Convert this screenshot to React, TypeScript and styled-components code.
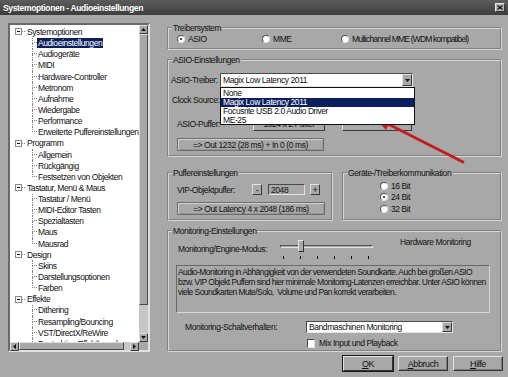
import React from 'react';
import styled, { createGlobalStyle } from 'styled-components';

// Tree data for the left navigation
interface TreeNode {
  label: string;
  children: string[];
}

const treeData: TreeNode[] = [
  {
    label: 'Systemoptionen',
    children: [
      'Audioeinstellungen',
      'Audiogeräte',
      'MIDI',
      'Hardware-Controller',
      'Metronom',
      'Aufnahme',
      'Wiedergabe',
      'Performance',
      'Erweiterte Puffereinstellungen',
    ],
  },
  { label: 'Programm', children: ['Allgemein', 'Rückgängig', 'Festsetzen von Objekten'] },
  {
    label: 'Tastatur, Menü & Maus',
    children: ['Tastatur / Menü', 'MIDI-Editor Tasten', 'Spezialtasten', 'Maus', 'Mausrad'],
  },
  { label: 'Design', children: ['Skins', 'Darstellungsoptionen', 'Farben'] },
  {
    label: 'Effekte',
    children: ['Dithering', 'Resampling/Bouncing', 'VST/DirectX/ReWire', 'Destruktive Effektberechnung'],
  },
];

const selectedItem = 'Audioeinstellungen';
const driverOptions = ['None', 'Magix Low Latency 2011', 'Focusrite USB 2.0 Audio Driver', 'ME-25'];
const monitoringTicks = 6;
const monitoringValue = 1;

const DownTriangle = () => (
  <svg width='5' height='3' viewBox='0 0 5 3'>
    <polygon points='0,0 5,0 2.5,3' fill='#111' />
  </svg>
);

const ArrowIcon = ({ dir }: { dir: 'up' | 'down' | 'left' | 'right' }) => {
  const pts = {
    up: '0,3 5,3 2.5,0',
    down: '0,0 5,0 2.5,3',
    left: '3,0 3,5 0,2.5',
    right: '0,0 0,5 3,2.5',
  }[dir];
  const vertical = dir === 'up' || dir === 'down';
  return (
    <svg width={vertical ? 5 : 3} height={vertical ? 3 : 5} viewBox={vertical ? '0 0 5 3' : '0 0 3 5'}>
      <polygon points={pts} fill='#111' />
    </svg>
  );
};

const App: React.FC = () => {
  const renderTree = () =>
    treeData.map((node, n) => (
      <React.Fragment key={node.label}>
        <TreeRow $indent={5}>
          <Expander>
            <MinusBar />
          </Expander>
          <Dash />
          <TreeLabel>{node.label}</TreeLabel>
        </TreeRow>
        {node.children.map((child, i) => (
          <TreeRow $indent={22} key={child}>
            <Branch>
              <BranchTop />
              {/* the last branch of the last group runs on below the visible area */}
              <BranchBottom $last={i === node.children.length - 1 && n !== treeData.length - 1} />
            </Branch>
            <TreeLabel $selected={child === selectedItem}>{child}</TreeLabel>
          </TreeRow>
        ))}
      </React.Fragment>
    ));

  return (
    <Window>
      <GlobalStyle />
      <TitleBar>
        <span>Systemoptionen - Audioeinstellungen</span>
        <CloseButton>
          <svg width='6' height='5' viewBox='0 0 6 5'>
            <path d='M0.5 0.5 L5.5 4.5 M5.5 0.5 L0.5 4.5' stroke='#111' strokeWidth='1.3' />
          </svg>
        </CloseButton>
      </TitleBar>

      <Body>
        <TreePanel>
          <TreeList>{renderTree()}</TreeList>
          <VScroll>
            <ScrollArrow>
              <ArrowIcon dir='up' />
            </ScrollArrow>
            <ScrollThumb $size={271} />
            <ScrollTrack />
            <ScrollArrow>
              <ArrowIcon dir='down' />
            </ScrollArrow>
          </VScroll>
          <HScroll>
            <ScrollArrow>
              <ArrowIcon dir='left' />
            </ScrollArrow>
            <ScrollThumb $size={105} />
            <ScrollTrack />
            <ScrollArrow>
              <ArrowIcon dir='right' />
            </ScrollArrow>
          </HScroll>
          <ScrollCorner />
        </TreePanel>

        <RightColumn>
          <Group $h={27}>
            <Legend>Treibersystem</Legend>
            <RadioRow>
              <RadioOption $w={85}>
                <RadioDot $checked />
                ASIO
              </RadioOption>
              <RadioOption $w={79}>
                <RadioDot />
                MME
              </RadioOption>
              <RadioOption $tight>
                <RadioDot />
                Multichannel MME (WDM kompatibel)
              </RadioOption>
            </RadioRow>
          </Group>

          <Group $h={102} $mt={5}>
            <Legend>ASIO-Einstellungen</Legend>
            <AsioBody>
              <FormRow $h={14}>
                <FieldLabel $w={49}>ASIO-Treiber:</FieldLabel>
                <Select $w={193}>
                  <SelectText>Magix Low Latency 2011</SelectText>
                  <SelectArrow>
                    <DownTriangle />
                  </SelectArrow>
                  <DropList>
                    {driverOptions.map((opt) => (
                      <DropItem key={opt} $active={opt === 'Magix Low Latency 2011'}>
                        {opt}
                      </DropItem>
                    ))}
                  </DropList>
                </Select>
              </FormRow>
              <FormRow $h={14} $mt={6}>
                <FieldLabel $w={49} $pl={1}>
                  Clock Source:
                </FieldLabel>
                <Select $w={193}>
                  <SelectText />
                  <SelectArrow>
                    <DownTriangle />
                  </SelectArrow>
                </Select>
              </FormRow>
              <FormRow $h={14} $mt={10}>
                <FieldLabel $w={82} $pl={6}>
                  ASIO-Puffer:
                </FieldLabel>
                <PushButton $w={72}>1024 x 2 Puffer</PushButton>
                <PushButton $w={70} $ml={17} />
              </FormRow>
              <InfoBox $w={147} $ml={6} $mt={7}>
                =&gt; Out 1232 (28 ms) + In 0 (0 ms)
              </InfoBox>
            </AsioBody>
          </Group>

          <SplitRow>
            <Group $h={53} $w={166}>
              <Legend>Puffereinstellungen</Legend>
              <PufferBody>
                <FormRow $h={11}>
                  <FieldLabel $w={75}>VIP-Objektpuffer:</FieldLabel>
                  <SmallButton>-</SmallButton>
                  <NumberField>2048</NumberField>
                  <SmallButton $ml={5}>+</SmallButton>
                </FormRow>
                <InfoBox $w={148} $mt={7}>
                  =&gt; Out Latency 4 x 2048 (186 ms)
                </InfoBox>
              </PufferBody>
            </Group>
            <Group $h={53} $w={160} $ml={9}>
              <Legend>Geräte-/Treiberkommunikation</Legend>
              <BitList>
                {['16 Bit', '24 Bit', '32 Bit'].map((b) => (
                  <BitOption key={b}>
                    <RadioDot $checked={b === '24 Bit'} />
                    {b}
                  </BitOption>
                ))}
              </BitList>
            </Group>
          </SplitRow>

          <Group $h={126} $mt={5}>
            <Legend>Monitoring-Einstellungen</Legend>
            <SliderRow>
              <SliderLabel>Monitoring/Engine-Modus:</SliderLabel>
              <Slider>
                <TrackWrap>
                  <Track />
                  <Thumb style={{ left: 3 + monitoringValue * 15 }} />
                </TrackWrap>
                <Ticks>
                  {Array.from({ length: monitoringTicks }).map((_, i) => (
                    <Tick key={i} />
                  ))}
                </Ticks>
              </Slider>
              <HardwareLabel>Hardware Monitoring</HardwareLabel>
            </SliderRow>
            <DescriptionBox>
              Audio-Monitoring in Abhängigkeit von der verwendeten Soundkarte. Auch bei großen ASIO
              <br />
              bzw. VIP Objekt Puffern sind hier minimale Monitoring-Latenzen erreichbar. Unter ASIO können
              <br />
              viele Soundkarten Mute/Solo,&nbsp; Volume und Pan korrekt verarbeiten.
            </DescriptionBox>
            <FormRow $h={12} $mt={8}>
              <FieldLabel $w={137} $pl={16}>
                Monitoring-Schaltverhalten:
              </FieldLabel>
              <Select $w={147}>
                <SelectText>Bandmaschinen Monitoring</SelectText>
                <SelectArrow>
                  <DownTriangle />
                </SelectArrow>
              </Select>
            </FormRow>
            <CheckRow>
              <CheckBox />
              Mix Input und Playback
            </CheckRow>
          </Group>

          <ButtonBar>
            <DialogButton $default>
              <u>O</u>K
            </DialogButton>
            <DialogButton>
              <u>A</u>bbruch
            </DialogButton>
            <DialogButton>
              <u>H</u>ilfe
            </DialogButton>
          </ButtonBar>
        </RightColumn>
      </Body>

      <ArrowOverlay width='508' height='377' viewBox='0 0 508 377'>
        <line x1='463' y1='162' x2='388' y2='124' stroke='#c41c1c' strokeWidth='2.8' strokeLinecap='round' />
        <polygon points='373,116 393,116 386,130' fill='#c41c1c' />
      </ArrowOverlay>
    </Window>
  );
};

export default App;

const GlobalStyle = createGlobalStyle`
  html, body {
    margin: 0;
    padding: 0;
    background: #a8a8a8;
  }
  * {
    box-sizing: border-box;
  }
`;

const Window = styled.div`
  position: relative;
  width: 508px;
  height: 377px;
  overflow: hidden;
  background: #a8a8a8;
  font-family: 'Liberation Sans', Arial, sans-serif;
  font-size: 8.5px;
  letter-spacing: -0.42px;
  line-height: 10px;
  color: #111;
`;

const TitleBar = styled.div`
  height: 15px;
  display: flex;
  align-items: center;
  justify-content: space-between;
  padding: 0 3px;
  background: linear-gradient(to bottom, #5c5c5c, #3d3d3d);
  color: #fff;
  font-weight: bold;
  font-size: 8.5px;
  letter-spacing: -0.35px;
`;

const CloseButton = styled.div`
  width: 10px;
  height: 9px;
  display: flex;
  align-items: center;
  justify-content: center;
  background: #b2b2b2;
  border: 1px solid;
  border-color: #e6e6e6 #333 #333 #e6e6e6;
`;

const Body = styled.div`
  display: grid;
  grid-template-columns: 142px 335px;
  column-gap: 17px;
  align-items: start;
  padding: 8px 0 0 8px;
`;

const TreePanel = styled.div`
  width: 142px;
  height: 329px;
  display: grid;
  grid-template-columns: 1fr 9px;
  grid-template-rows: 1fr 8px;
  border: 2px solid;
  border-color: #6a6a6a #e2e2e2 #e2e2e2 #6a6a6a;
  background: #fff;
`;

const TreeList = styled.div`
  overflow: hidden;
  padding-top: 1.4px;
  background: #fff;
`;

const TreeRow = styled.div<{ $indent: number }>`
  display: flex;
  align-items: stretch;
  height: 11.15px;
  padding-left: ${(p) => p.$indent}px;
  white-space: nowrap;
`;

const Expander = styled.span`
  align-self: center;
  width: 7px;
  height: 7px;
  flex: 0 0 7px;
  display: flex;
  align-items: center;
  justify-content: center;
  border: 1px solid #8a8a8a;
  background: #fff;
`;

const MinusBar = styled.span`
  width: 3px;
  height: 1px;
  background: #111;
`;

const Dash = styled.span`
  align-self: center;
  width: 3px;
  border-top: 1px dotted #808080;
  margin-right: 1px;
`;

const Branch = styled.span`
  display: grid;
  grid-template-rows: 1fr 1fr;
  width: 5px;
  flex: 0 0 5px;
`;

const BranchTop = styled.span`
  border-left: 1px dotted #808080;
  border-bottom: 1px dotted #808080;
`;

const BranchBottom = styled.span<{ $last?: boolean }>`
  border-left: 1px dotted ${(p) => (p.$last ? 'transparent' : '#808080')};
`;

const TreeLabel = styled.span<{ $selected?: boolean }>`
  align-self: center;
  padding: 0 1px;
  line-height: 10px;
  background: ${(p) => (p.$selected ? '#0c1f5c' : 'transparent')};
  color: ${(p) => (p.$selected ? '#fff' : '#111')};
`;

const VScroll = styled.div`
  display: flex;
  flex-direction: column;
  background: #c6c6c6;
`;

const HScroll = styled.div`
  display: flex;
  background: #c6c6c6;
`;

const ScrollArrow = styled.div`
  flex: 0 0 9px;
  width: 9px;
  height: 9px;
  display: flex;
  align-items: center;
  justify-content: center;
  background: #a8a8a8;
  border: 1px solid;
  border-color: #dedede #3c3c3c #3c3c3c #dedede;
`;

const ScrollThumb = styled.div<{ $size: number }>`
  flex: 0 0 ${(p) => p.$size}px;
  background: #a8a8a8;
  border: 1px solid;
  border-color: #dedede #4a4a4a #4a4a4a #dedede;
`;

const ScrollTrack = styled.div`
  flex: 1;
  background: #c6c6c6;
`;

const ScrollCorner = styled.div`
  background: #a8a8a8;
`;

const RightColumn = styled.div`
  display: flex;
  flex-direction: column;
`;

const Group = styled.fieldset<{ $h: number; $w?: number; $mt?: number; $ml?: number }>`
  margin: ${(p) => p.$mt ?? 0}px 0 0 ${(p) => p.$ml ?? 0}px;
  padding: 0;
  min-width: 0;
  width: ${(p) => (p.$w ? `${p.$w}px` : 'auto')};
  height: ${(p) => p.$h}px;
  border: 2px groove #d6d6d6;
`;

const Legend = styled.legend`
  margin-left: 3px;
  padding: 0 1px;
  line-height: 10px;
`;

const RadioRow = styled.div`
  display: flex;
  align-items: center;
  height: 11px;
  padding-left: 8px;
`;

const RadioOption = styled.label<{ $w?: number; $tight?: boolean }>`
  display: flex;
  align-items: center;
  gap: 3px;
  width: ${(p) => (p.$w ? `${p.$w}px` : 'auto')};
  letter-spacing: ${(p) => (p.$tight ? '-0.8px' : 'inherit')};
  white-space: nowrap;
`;

const RadioDot = styled.span<{ $checked?: boolean }>`
  width: 8px;
  height: 8px;
  flex: 0 0 8px;
  border-radius: 50%;
  display: flex;
  align-items: center;
  justify-content: center;
  background: #fff;
  border: 1px solid;
  border-color: #555 #e2e2e2 #e2e2e2 #555;

  &::after {
    content: '';
    width: 2px;
    height: 2px;
    border-radius: 50%;
    background: ${(p) => (p.$checked ? '#111' : 'transparent')};
  }
`;

const AsioBody = styled.div`
  display: flex;
  flex-direction: column;
  padding: 8px 0 0 2px;
`;

const FormRow = styled.div<{ $h: number; $mt?: number }>`
  display: flex;
  align-items: center;
  height: ${(p) => p.$h}px;
  margin-top: ${(p) => p.$mt ?? 0}px;
  white-space: nowrap;
`;

const FieldLabel = styled.span<{ $w: number; $pl?: number }>`
  flex: 0 0 ${(p) => p.$w}px;
  padding-left: ${(p) => p.$pl ?? 0}px;
`;

const Select = styled.div<{ $w: number }>`
  position: relative;
  width: ${(p) => p.$w}px;
  height: 100%;
  display: flex;
  align-items: center;
  justify-content: space-between;
  background: #fff;
  border: 1px solid;
  border-color: #4a4a4a #e4e4e4 #e4e4e4 #4a4a4a;
`;

const SelectText = styled.span`
  padding-left: 2px;
`;

const SelectArrow = styled.span`
  width: 10px;
  height: 100%;
  display: flex;
  align-items: center;
  justify-content: center;
  background: #a8a8a8;
  border: 1px solid;
  border-color: #e2e2e2 #3a3a3a #3a3a3a #e2e2e2;
`;

const DropList = styled.div`
  position: absolute;
  z-index: 5;
  top: 13px;
  left: -1px;
  width: 195px;
  height: 38px;
  display: flex;
  flex-direction: column;
  padding-top: 1px;
  background: #fff;
  border: 1px solid #111;
`;

const DropItem = styled.div<{ $active?: boolean }>`
  height: 9px;
  line-height: 9px;
  padding-left: 2px;
  background: ${(p) => (p.$active ? '#0c1f5c' : 'transparent')};
  color: ${(p) => (p.$active ? '#fff' : '#111')};
`;

const PushButton = styled.div<{ $w: number; $ml?: number }>`
  width: ${(p) => p.$w}px;
  height: 100%;
  margin-left: ${(p) => p.$ml ?? 0}px;
  display: flex;
  align-items: center;
  justify-content: center;
  overflow: hidden;
  border: 1px solid;
  border-color: #e0e0e0 #3a3a3a #3a3a3a #e0e0e0;
`;

const InfoBox = styled.div<{ $w: number; $ml?: number; $mt?: number }>`
  width: ${(p) => p.$w}px;
  height: 13px;
  margin-left: ${(p) => p.$ml ?? 0}px;
  margin-top: ${(p) => p.$mt ?? 0}px;
  display: flex;
  align-items: center;
  justify-content: center;
  white-space: nowrap;
  border: 1px solid #6c6c6c;
  box-shadow: inset 1px 1px #d2d2d2, inset -1px -1px #989898;
`;

const SplitRow = styled.div`
  display: flex;
  margin-top: 11px;
`;

const PufferBody = styled.div`
  display: flex;
  flex-direction: column;
  padding: 6px 0 0 8px;
`;

const SmallButton = styled.div<{ $ml?: number }>`
  width: 10px;
  height: 11px;
  margin-left: ${(p) => p.$ml ?? 0}px;
  display: flex;
  align-items: center;
  justify-content: center;
  border: 1px solid;
  border-color: #e0e0e0 #3a3a3a #3a3a3a #e0e0e0;
`;

const NumberField = styled.div`
  width: 37px;
  height: 11px;
  margin-left: 6px;
  padding-left: 2px;
  display: flex;
  align-items: center;
  border: 1px solid;
  border-color: #4a4a4a #e0e0e0 #e0e0e0 #4a4a4a;
`;

const BitList = styled.div`
  display: flex;
  flex-direction: column;
  padding: 2px 0 0 36px;
`;

const BitOption = styled.label`
  display: flex;
  align-items: center;
  gap: 3px;
  height: 11.5px;
`;

const SliderRow = styled.div`
  display: grid;
  grid-template-columns: 102px 93px auto;
  height: 26px;
  padding-left: 9px;
  white-space: nowrap;
`;

const SliderLabel = styled.span`
  margin-top: 8px;
`;

const Slider = styled.div`
  display: flex;
  flex-direction: column;
  padding-top: 4px;
`;

const TrackWrap = styled.div`
  position: relative;
  height: 12px;
  display: flex;
  align-items: center;
`;

const Track = styled.div`
  width: 100%;
  height: 3px;
  border: 1px solid;
  border-color: #555 #e0e0e0 #e0e0e0 #555;
`;

const Thumb = styled.div`
  position: absolute;
  top: 0;
  width: 6px;
  height: 12px;
  background: #a8a8a8;
  border: 1px solid;
  border-color: #e8e8e8 #333 #333 #e8e8e8;
`;

const Ticks = styled.div`
  display: flex;
  justify-content: space-between;
  margin-top: 4px;
  padding: 0 4px 0 3px;
`;

const Tick = styled.span`
  width: 1px;
  height: 3px;
  background: #111;
`;

const HardwareLabel = styled.span`
  margin: 1px 0 0 27px;
`;

const DescriptionBox = styled.div`
  width: 314px;
  height: 48px;
  margin: 3px 0 0 7px;
  padding: 1px 1px 0;
  white-space: nowrap;
  letter-spacing: -0.55px;
  overflow: hidden;
  border: 1px solid;
  border-color: #6a6a6a #d6d6d6 #d6d6d6 #6a6a6a;
`;

const CheckRow = styled.label`
  display: flex;
  align-items: center;
  gap: 4px;
  height: 10px;
  margin-top: 5px;
  padding-left: 138px;
`;

const CheckBox = styled.span`
  width: 8px;
  height: 9px;
  background: #fff;
  border: 1px solid;
  border-color: #4a4a4a #e2e2e2 #e2e2e2 #4a4a4a;
`;

const ButtonBar = styled.div`
  display: flex;
  justify-content: flex-end;
  gap: 5px;
  margin: 4px -1px 0 0;
`;

const DialogButton = styled.div<{ $default?: boolean }>`
  width: 50px;
  height: 15px;
  display: flex;
  align-items: center;
  justify-content: center;
  font-size: 9px;
  border: 1px solid;
  border-color: #e2e2e2 #333 #333 #e2e2e2;
  box-shadow: ${(p) => (p.$default ? '0 0 0 1px #1a1a1a' : 'inset -1px -1px #7c7c7c')};
`;

const ArrowOverlay = styled.svg`
  position: absolute;
  left: 0;
  top: 0;
  pointer-events: none;
`;
